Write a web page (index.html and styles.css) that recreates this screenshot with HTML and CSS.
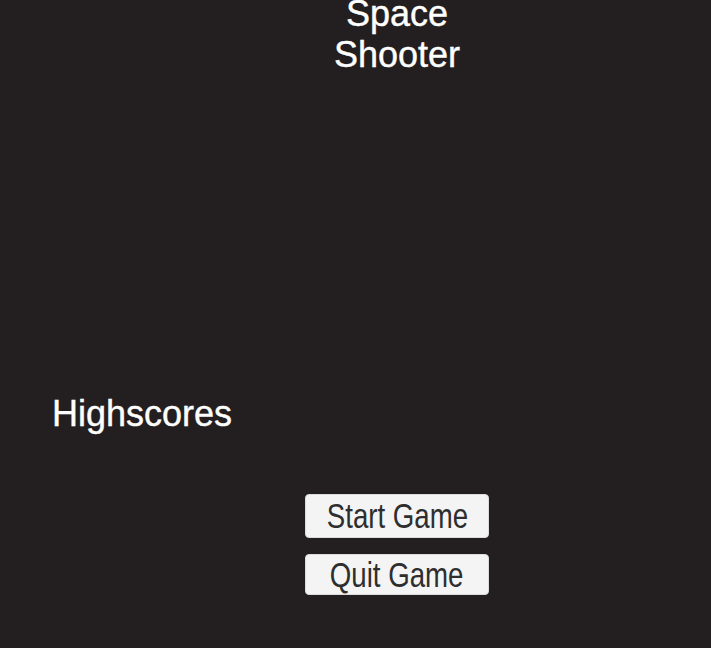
FILE: index.html
```html
<!DOCTYPE html>
<html>
<head>
<meta charset="utf-8">
<link rel="stylesheet" href="styles.css">
</head>
<body>
<main class="menu">
  <h1 class="title">Space<br>Shooter</h1>
  <h2 class="scores">Highscores</h2>
  <div class="buttons">
    <button class="btn btn-start"><span class="btn-label">Start Game</span></button>
    <button class="btn btn-quit"><span class="btn-label">Quit Game</span></button>
  </div>
</main>
</body>
</html>
```
FILE: styles.css
```css
html, body {
  margin: 0;
  padding: 0;
  background: #231f20;
  height: 100%;
  overflow: hidden;
}
.menu {
  display: flex;
  flex-direction: column;
  font-family: "Liberation Sans", Arial, sans-serif;
  color: #ffffff;
}
.title {
  margin: -7px 0 0 305px;
  width: 184px;
  text-align: center;
  font-size: 36px;
  font-weight: normal;
  line-height: 41px;
  white-space: nowrap;
  -webkit-text-stroke: 0.4px #ffffff;
}
.scores {
  margin: 319px 0 0 52px;
  font-size: 36px;
  font-weight: normal;
  line-height: 40px;
  -webkit-text-stroke: 0.4px #ffffff;
}
.buttons {
  margin: 60px 0 0 305px;
  width: 184px;
  display: flex;
  flex-direction: column;
  gap: 16px;
}
.btn {
  box-sizing: border-box;
  width: 184px;
  margin: 0;
  padding: 0;
  border: 1px solid #dcdcdc;
  border-radius: 4px;
  background: #f4f4f4;
  color: #2e2e2e;
  font-family: "Liberation Sans", Arial, sans-serif;
  font-size: 35px;
  text-align: center;
  white-space: nowrap;
  overflow: hidden;
}
.btn-label {
  display: inline-block;
  transform: scaleX(0.79);
}
.btn-start {
  height: 44px;
  line-height: 42px;
}
.btn-quit {
  height: 41px;
  line-height: 38px;
}
```
